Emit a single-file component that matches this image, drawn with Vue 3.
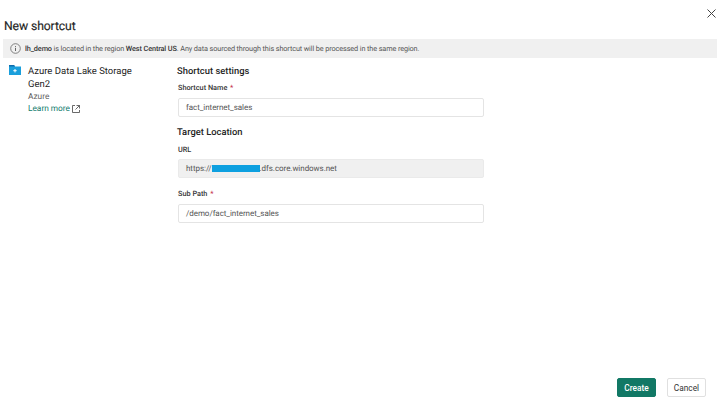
<template>
  <div class="dialog">
    <header class="head">
      <h1 class="title">New shortcut</h1>
      <svg class="close" width="9" height="9" viewBox="0 0 9 9" aria-label="Close"><path d="M.5.5l8 8M8.5.5l-8 8" stroke="#444" stroke-width="1" fill="none"/></svg>
    </header>
    <div class="banner">
      <svg class="info" width="11" height="11" viewBox="0 0 11 11"><circle cx="5.5" cy="5.5" r="4.8" fill="none" stroke="#666" stroke-width=".8"/><path d="M5.5 3v.9M5.5 4.8v3.2" stroke="#555" stroke-width=".9"/></svg>
      <span><b>lh_demo</b> is located in the region <b>West Central US</b>. Any data sourced through this shortcut will be processed in the same region.</span>
    </div>
    <main class="body">
      <aside class="source">
        <svg class="folder" width="12" height="10" viewBox="0 0 12 10"><path d="M0 0h5l1 1.5h6V10H0z" fill="#1a9fdc"/><path d="M0 0h5l1 1.5H0z" fill="#0f6cab"/><path d="M6 4v3.4M4.3 5.7h3.4" stroke="#fff" stroke-width="1"/></svg>
        <div class="source-text">
          <div class="source-name">Azure Data Lake Storage Gen2</div>
          <div class="source-kind">Azure</div>
          <div class="learn">Learn more
            <svg width="8" height="8" viewBox="0 0 8 8"><path d="M3 .5H.5v7h7V5M4.5.5h3v3M7.5.5L3.5 4.5" fill="none" stroke="#444" stroke-width=".8"/></svg>
          </div>
        </div>
      </aside>
      <section class="form">
        <h2 class="sec first">Shortcut settings</h2>
        <label class="lab">Shortcut Name <i>*</i></label>
        <div class="field">fact_internet_sales</div>
        <h2 class="sec second">Target Location</h2>
        <label class="lab url">URL</label>
        <div class="field">https://<span class="mask"></span>.dfs.core.windows.net</div>
        <label class="lab sub">Sub Path <i>*</i></label>
        <div class="field subf">/demo/fact_internet_sales</div>
      </section>
    </main>
    <footer class="foot">
      <button class="btn primary">Create</button>
      <button class="btn">Cancel</button>
    </footer>
  </div>
</template>

<script setup>
</script>

<style>
html, body { margin: 0; background: #fff; }
</style>

<style scoped>
.dialog { width: 721px; height: 404px; display: flex; flex-direction: column; font-family: Roboto, "Noto Sans", sans-serif; color: #242424; box-sizing: border-box; overflow: hidden; text-rendering: geometricPrecision; }
.head { height: 39px; display: flex; justify-content: space-between; padding: 9px 5px 0 4px; box-sizing: border-box; }
.title { margin: 9px 0 0; font-size: 12.2px; font-weight: 400; line-height: 16px; letter-spacing: -.1px; -webkit-text-stroke: .15px #242424; }
.banner { margin: 0 4px 0 3px; height: 19px; background: #f0f0f0; display: flex; align-items: center; gap: 4px; padding-left: 7px; font-size: 7.3px; letter-spacing: -.115px; color: #555; white-space: nowrap; }
.banner b { color: #333; font-weight: 500; }
.body { flex: 1; display: flex; }
.source { width: 177px; padding: 6px 0 0 9px; box-sizing: border-box; display: flex; gap: 7px; }
.folder { margin-top: 1px; flex: none; }
.source-text { width: 112px; }
.source-name { font-size: 9.5px; line-height: 13px; margin-top: 1px; }
.source-kind { font-size: 8.3px; line-height: 12px; color: #616161; }
.learn { font-size: 8.3px; line-height: 12px; color: #0f7b6c; display: flex; align-items: center; gap: 2px; }
.form { width: 307px; display: flex; flex-direction: column; }
.sec { margin: 0; font-size: 9.4px; font-weight: 500; line-height: 13px; }
.first { margin-top: 7px; }
.second { margin-top: 9px; }
.lab { font-size: 7.3px; font-weight: 500; line-height: 10px; margin: 5px 0 0 1px; color: #333; }
.lab i { color: #c4314b; font-style: normal; margin-left: 1px; }
.lab.url { margin-top: 6px; }
.lab.sub { margin-top: 11px; }
.field { margin: 5px 0 0 1px; height: 19px; width: 306px; border: 1px solid #e4e4e4; border-radius: 2px; box-sizing: border-box; display: flex; align-items: center; padding-left: 7px; font-size: 8px; letter-spacing: -.05px; color: #555; }
.url + .field { background: #f0f0f0; border-color: #eaeaea; margin-top: 4px; }
.subf { margin-top: 5px; }
.mask { display: inline-block; width: 48px; height: 7px; background: #0ea0e0; }
.foot { display: flex; justify-content: flex-end; gap: 11px; padding: 0 15px 7px 0; }
.btn { width: 39px; height: 19px; font: 400 8.3px Roboto, sans-serif; border: 1px solid #e0e0e0; border-radius: 2px; background: #fff; color: #333; padding: 0; }
.primary { font-weight: 500; background: #117865; border-color: #117865; color: #fff; }
</style>
